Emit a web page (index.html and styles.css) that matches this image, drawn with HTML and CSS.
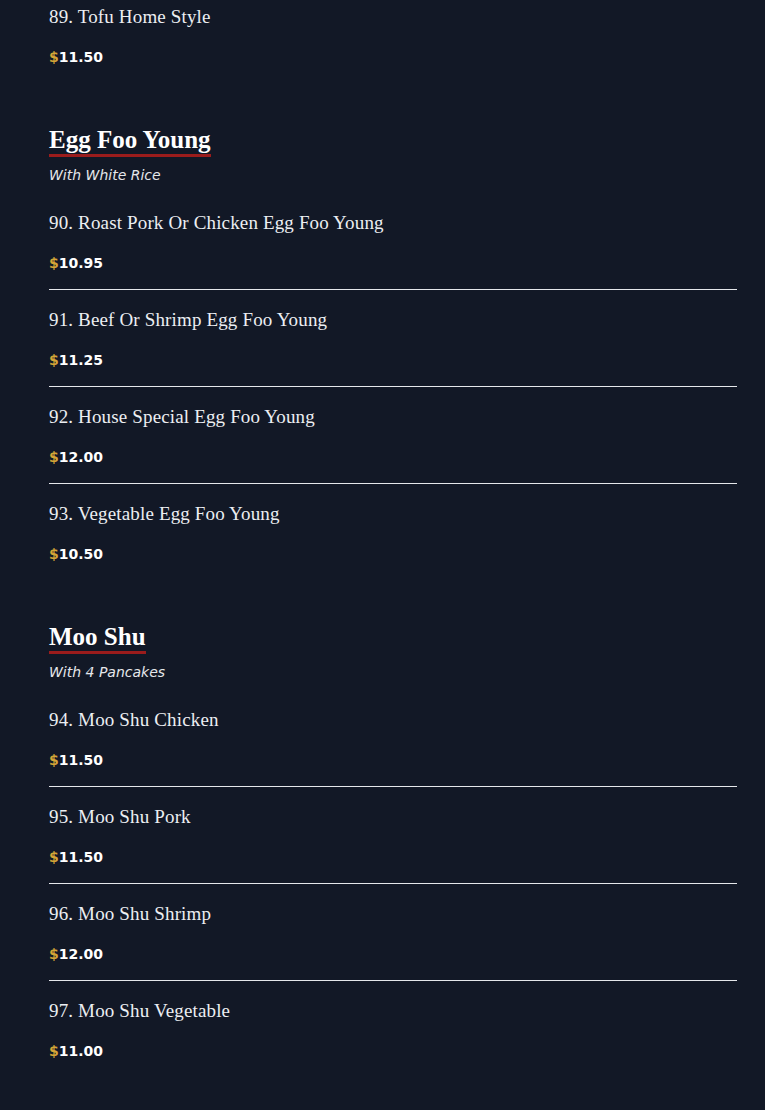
FILE: index.html
```html
<!DOCTYPE html>
<html lang="en">
<head>
<meta charset="utf-8">
<title>Menu</title>
<link rel="stylesheet" href="styles.css">
</head>
<body>
<main class="menu">
  <section class="section section-cont">
    <div class="item">
      <div class="name">89. Tofu Home Style</div>
      <div class="price"><span class="cur">$</span>11.50</div>
    </div>
  </section>

  <section class="section">
    <h2 class="heading"><span>Egg Foo Young</span></h2>
    <p class="sub">With White Rice</p>
    <div class="item">
      <div class="name">90. Roast Pork Or Chicken Egg Foo Young</div>
      <div class="price"><span class="cur">$</span>10.95</div>
    </div>
    <div class="item">
      <div class="name">91. Beef Or Shrimp Egg Foo Young</div>
      <div class="price"><span class="cur">$</span>11.25</div>
    </div>
    <div class="item">
      <div class="name">92. House Special Egg Foo Young</div>
      <div class="price"><span class="cur">$</span>12.00</div>
    </div>
    <div class="item">
      <div class="name">93. Vegetable Egg Foo Young</div>
      <div class="price"><span class="cur">$</span>10.50</div>
    </div>
  </section>

  <section class="section">
    <h2 class="heading"><span>Moo Shu</span></h2>
    <p class="sub">With 4 Pancakes</p>
    <div class="item">
      <div class="name">94. Moo Shu Chicken</div>
      <div class="price"><span class="cur">$</span>11.50</div>
    </div>
    <div class="item">
      <div class="name">95. Moo Shu Pork</div>
      <div class="price"><span class="cur">$</span>11.50</div>
    </div>
    <div class="item">
      <div class="name">96. Moo Shu Shrimp</div>
      <div class="price"><span class="cur">$</span>12.00</div>
    </div>
    <div class="item">
      <div class="name">97. Moo Shu Vegetable</div>
      <div class="price"><span class="cur">$</span>11.00</div>
    </div>
  </section>
</main>
</body>
</html>
```

FILE: styles.css
```css
* { box-sizing: border-box; }
html, body {
  margin: 0;
  padding: 0;
  background: #121826;
}
body {
  color: #f3f4f6;
  font-family: "DejaVu Sans", sans-serif;
}
.menu {
  padding: 3px 28px 40px 49px;
  display: flex;
  flex-direction: column;
  gap: 43px;
}
.section {
  display: flex;
  flex-direction: column;
}
.heading {
  display: flex;
  margin: 0 0 8px 0;
  font-family: "Liberation Serif", "Times New Roman", serif;
  font-weight: 700;
  font-size: 25px;
  line-height: 28px;
  color: #ffffff;
}
.heading span {
  display: block;
  line-height: 28px;
  border-bottom: 3px solid #9b1c1c;
}
.sub {
  margin: 0 0 8px 0;
  font-style: italic;
  font-size: 14px;
  line-height: 20px;
  color: #e5e7eb;
}
.item {
  padding: 16px 0;
  display: flex;
  flex-direction: column;
  gap: 16px;
}
.item + .item {
  border-top: 1px solid #e5e7eb;
}
.section-cont .item {
  padding-top: 0;
}
.name {
  font-family: "Liberation Serif", "Times New Roman", serif;
  font-size: 19px;
  letter-spacing: 0.15px;
  line-height: 28px;
  color: #eceef2;
}
.price {
  font-weight: 700;
  font-size: 14px;
  line-height: 20px;
  color: #ffffff;
}
.cur {
  color: #d4a537;
}
```
